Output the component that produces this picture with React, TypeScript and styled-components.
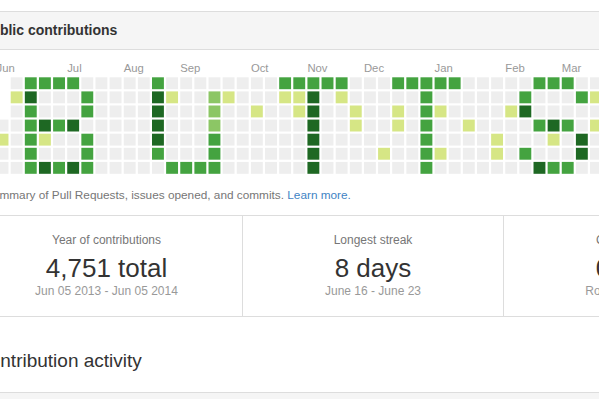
import React from "react";
import styled, { createGlobalStyle } from "styled-components";

const GlobalStyle = createGlobalStyle`
  html, body {
    margin: 0;
    padding: 0;
    background: #fff;
  }
  body {
    font-family: "Liberation Sans", Arial, sans-serif;
    color: #333;
    overflow: hidden;
  }
`;

const Page = styled.div`
  width: 599px;
  height: 399px;
  overflow: hidden;
`;

// the original page is cropped on the left, so the column starts offscreen
const Wrapper = styled.div`
  margin-left: -30px;
  width: 830px;
  padding-top: 11px;
`;

const Box = styled.div`
  border: 1px solid #ddd;
  border-radius: 3px;
`;

const BoxHeader = styled.h3`
  margin: 0;
  height: 37px;
  line-height: 37px;
  padding: 0 11px;
  background: #f5f5f5;
  border-bottom: 1px solid #ddd;
  font-size: 14px;
  font-weight: bold;
  color: #333;
`;

const Graph = styled.svg`
  display: block;
`;

const Summary = styled.p`
  margin: 0;
  padding: 7px 14px 12px;
  font-size: 11.8px;
  line-height: 16px;
  color: #767676;

  a {
    color: #4183c4;
    text-decoration: none;
  }
`;

const Stats = styled.div`
  display: flex;
  border-top: 1px solid #ddd;
`;

const StatColumn = styled.div<{ $width: number; $last?: boolean }>`
  width: ${(p) => p.$width}px;
  flex: none;
  border-right: ${(p) => (p.$last ? "none" : "1px solid #ddd")};
  padding: 16px 0 18px;
  text-align: center;
`;

const StatLabel = styled.div`
  font-size: 12px;
  line-height: 16px;
  color: #767676;
`;

const StatNumber = styled.div`
  margin-top: 4px;
  font-size: 26px;
  line-height: 32px;
  color: #333;
`;

const StatDates = styled.div`
  font-size: 12px;
  line-height: 14px;
  color: #999;
`;

const SectionTitle = styled.h3`
  margin: 32px 0 19px 6px;
  font-size: 19px;
  line-height: 24px;
  font-weight: normal;
  color: #333;
`;

const NextBox = styled.div`
  height: 40px;
  border: 1px solid #ddd;
  border-radius: 3px;
  background: #f5f5f5;
`;

const COLORS = ["#eeeeee", "#d6e685", "#8cc665", "#44a340", "#1e6823"];

// week columns, the first one is the partial week (starts on Wednesday)
const weeks: number[][] = [
  [-1, -1, -1, 0, 1, 0, 0],
  [0, 1, 0, 0, 0, 0, 0],
  [3, 4, 3, 3, 3, 3, 3],
  [3, 0, 0, 4, 1, 0, 4],
  [3, 0, 0, 3, 0, 0, 3],
  [3, 0, 0, 4, 0, 0, 4],
  [0, 3, 3, 0, 3, 3, 3],
  [0, 0, 0, 0, 0, 0, 0],
  [0, 0, 0, 0, 0, 0, 0],
  [0, 0, 0, 0, 0, 0, 0],
  [0, 0, 0, 0, 0, 0, 0],
  [3, 4, 4, 4, 4, 3, 0],
  [0, 1, 0, 0, 0, 0, 3],
  [0, 0, 0, 0, 0, 0, 3],
  [0, 0, 0, 0, 0, 0, 3],
  [0, 2, 2, 2, 3, 3, 3],
  [0, 1, 0, 0, 0, 0, 0],
  [0, 0, 0, 0, 0, 0, 0],
  [0, 0, 1, 0, 0, 0, 0],
  [0, 0, 0, 0, 0, 0, 0],
  [3, 1, 0, 0, 0, 0, 0],
  [3, 1, 1, 0, 0, 0, 0],
  [3, 4, 4, 4, 4, 4, 4],
  [3, 0, 0, 0, 0, 0, 0],
  [3, 1, 0, 0, 0, 0, 0],
  [0, 0, 1, 1, 0, 0, 0],
  [0, 0, 0, 0, 0, 0, 0],
  [0, 0, 0, 0, 0, 1, 0],
  [3, 0, 1, 1, 0, 0, 0],
  [3, 0, 0, 0, 0, 0, 0],
  [3, 3, 3, 3, 3, 3, 3],
  [3, 0, 1, 0, 0, 1, 0],
  [3, 0, 0, 0, 0, 0, 0],
  [0, 0, 0, 1, 0, 0, 0],
  [0, 0, 0, 0, 0, 0, 0],
  [0, 0, 0, 0, 1, 1, 0],
  [0, 0, 1, 0, 0, 0, 0],
  [0, 3, 4, 0, 0, 3, 0],
  [3, 0, 0, 3, 0, 0, 4],
  [3, 0, 0, 4, 1, 0, 3],
  [3, 0, 0, 3, 0, 0, 3],
  [0, 3, 0, 0, 4, 4, 0],
  [0, 1, 0, 1, 0, 0, 0],
];

const months: [string, number][] = [
  ["Jun", -1],
  ["Jul", 4],
  ["Aug", 8],
  ["Sep", 12],
  ["Oct", 17],
  ["Nov", 21],
  ["Dec", 25],
  ["Jan", 30],
  ["Feb", 35],
  ["Mar", 39],
];

const PITCH = 14.13;
const ROW = 14.1;
const X0 = 10.7;
const Y0 = 77.3;
const CELL = 11.9;

const colX = (i: number) => X0 + PITCH * i;

const ContributionGraph = () => (
  <Graph width={829} height={130} viewBox="-29 50 829 130">
    {months.map(([name, col]) => (
      <text
        key={name}
        x={colX(col)}
        y={71.5}
        fontSize={11.3}
        fill="#999"
        fontFamily='"Liberation Sans", Arial, sans-serif'
      >
        {name}
      </text>
    ))}
    {weeks.map((days, w) =>
      days.map((level, d) =>
        level < 0 ? null : (
          <rect
            key={`${w}-${d}`}
            x={colX(w - 1)}
            y={Y0 + ROW * d}
            width={CELL}
            height={CELL}
            fill={COLORS[level]}
          />
        )
      )
    )}
  </Graph>
);

const App = () => {
  return (
    <Page>
      <GlobalStyle />
      <Wrapper>
        <Box>
          <BoxHeader>Public contributions</BoxHeader>
          <ContributionGraph />
          <Summary>
            Summary of Pull Requests, issues opened, and commits.{" "}
            <a href="#">Learn more.</a>
          </Summary>
          <Stats>
            <StatColumn $width={271}>
              <StatLabel>Year of contributions</StatLabel>
              <StatNumber>4,751 total</StatNumber>
              <StatDates>Jun 05 2013 - Jun 05 2014</StatDates>
            </StatColumn>
            <StatColumn $width={260}>
              <StatLabel>Longest streak</StatLabel>
              <StatNumber>8 days</StatNumber>
              <StatDates>June 16 - June 23</StatDates>
            </StatColumn>
            <StatColumn $width={260} $last>
              <StatLabel>Current streak</StatLabel>
              <StatNumber>0 days</StatNumber>
              <StatDates>Rock - Hard Place</StatDates>
            </StatColumn>
          </Stats>
        </Box>
        <SectionTitle>Contribution activity</SectionTitle>
        <NextBox />
      </Wrapper>
    </Page>
  );
};

export default App;
